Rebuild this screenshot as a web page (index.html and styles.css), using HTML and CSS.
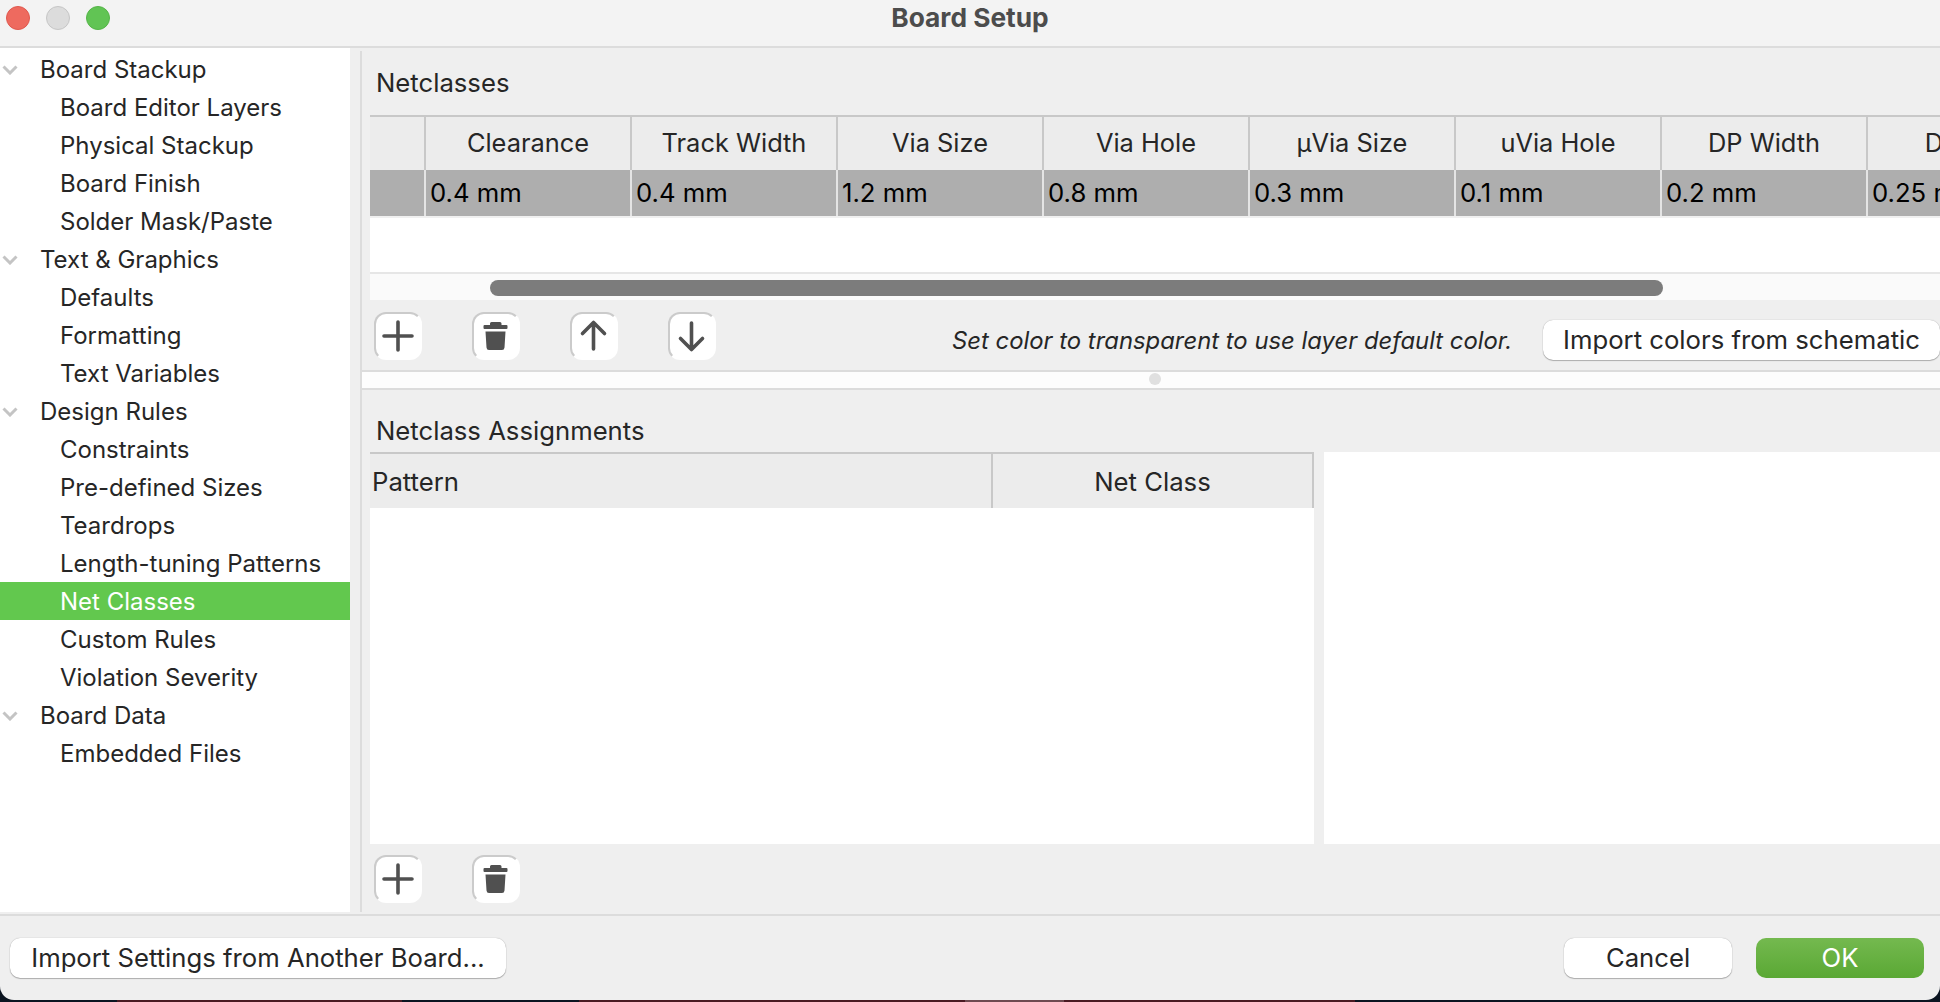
FILE: index.html
```html
<!doctype html>
<html>
<head>
<meta charset="UTF-8">
<title>Board Setup</title>
	<link rel="stylesheet" href="styles.css">
</head>

<body>
	<div class="window">
		<div class="titlebar">
			<div class="lights">
				<span class="light red"></span>
				<span class="light gray"></span>
				<span class="light green"></span>
			</div>
			<div class="title">Board Setup</div>
		</div>

		<div class="main">
			<div class="tree">
				<div class="row top"><svg class="chev" viewBox="0 0 16 10"><path d="M1.5 1.5 L8 8 L14.5 1.5"/></svg>Board Stackup</div>
				<div class="row">Board Editor Layers</div>
				<div class="row">Physical Stackup</div>
				<div class="row">Board Finish</div>
				<div class="row">Solder Mask/Paste</div>
				<div class="row top"><svg class="chev" viewBox="0 0 16 10"><path d="M1.5 1.5 L8 8 L14.5 1.5"/></svg>Text &amp; Graphics</div>
				<div class="row">Defaults</div>
				<div class="row">Formatting</div>
				<div class="row">Text Variables</div>
				<div class="row top"><svg class="chev" viewBox="0 0 16 10"><path d="M1.5 1.5 L8 8 L14.5 1.5"/></svg>Design Rules</div>
				<div class="row">Constraints</div>
				<div class="row">Pre-defined Sizes</div>
				<div class="row">Teardrops</div>
				<div class="row">Length-tuning Patterns</div>
				<div class="row selected">Net Classes</div>
				<div class="row">Custom Rules</div>
				<div class="row">Violation Severity</div>
				<div class="row top"><svg class="chev" viewBox="0 0 16 10"><path d="M1.5 1.5 L8 8 L14.5 1.5"/></svg>Board Data</div>
				<div class="row">Embedded Files</div>
			</div>

			<div class="content">
				<div class="upper">
					<div class="label">Netclasses</div>
					<div class="grid">
						<div class="gridrow head">
							<div class="cell corner"></div>
							<div class="cell">Clearance</div>
							<div class="cell">Track Width</div>
							<div class="cell">Via Size</div>
							<div class="cell">Via Hole</div>
							<div class="cell">µVia Size</div>
							<div class="cell">uVia Hole</div>
							<div class="cell">DP Width</div>
							<div class="cell">DP Gap</div>
						</div>
						<div class="gridrow data">
							<div class="cell corner"></div>
							<div class="cell">0.4 mm</div>
							<div class="cell">0.4 mm</div>
							<div class="cell">1.2 mm</div>
							<div class="cell">0.8 mm</div>
							<div class="cell">0.3 mm</div>
							<div class="cell">0.1 mm</div>
							<div class="cell">0.2 mm</div>
							<div class="cell">0.25 mm</div>
						</div>
						<div class="gridblank"></div>
						<div class="scrolltrack"><div class="scrollthumb"></div></div>
					</div>
					<div class="toolbar">
						<button class="tool"><svg viewBox="0 0 48 48"><path class="line" d="M10 24 H38 M24 10 V38"/></svg></button>
						<button class="tool"><svg viewBox="0 0 48 48"><path class="fill" d="M18 11.500 Q18 10 19.500 10 H28 Q29.500 10 29.500 11.500 V13 H34.500 Q35.500 13 35.500 14 V16 Q35.500 17 34.500 17 H12.500 Q11.500 17 11.500 16 V14 Q11.500 13 12.500 13 H18 Z M13.500 19.500 H33.500 L32.500 35.500 Q32.300 38 30 38 H17 Q14.700 38 14.500 35.500 Z"/></svg></button>
						<button class="tool"><svg viewBox="0 0 48 48"><path class="line" d="M23.500 37 V11 M12.500 21.500 L23.500 10.500 L34.500 21.500"/></svg></button>
						<button class="tool"><svg viewBox="0 0 48 48"><path class="line" d="M23.500 11 V37 M12.500 26.500 L23.500 37.500 L34.500 26.500"/></svg></button>
						<div class="hint">Set color to transparent to use layer default color.</div>
						<button class="btn import">Import colors from schematic</button>
					</div>
				</div>

				<div class="sash"><span class="sashdot"></span></div>

				<div class="lower">
					<div class="label">Netclass Assignments</div>
					<div class="panels">
						<div class="assign">
							<div class="assignhead">
								<div class="acell pattern">Pattern</div>
								<div class="acell netclass">Net Class</div>
							</div>
						</div>
						<div class="preview"></div>
					</div>
					<div class="toolbar small">
						<button class="tool"><svg viewBox="0 0 48 48"><path class="line" d="M10 24 H38 M24 10 V38"/></svg></button>
						<button class="tool"><svg viewBox="0 0 48 48"><path class="fill" d="M18 11.500 Q18 10 19.500 10 H28 Q29.500 10 29.500 11.500 V13 H34.500 Q35.500 13 35.500 14 V16 Q35.500 17 34.500 17 H12.500 Q11.500 17 11.500 16 V14 Q11.500 13 12.500 13 H18 Z M13.500 19.500 H33.500 L32.500 35.500 Q32.300 38 30 38 H17 Q14.700 38 14.500 35.500 Z"/></svg></button>
					</div>
				</div>
			</div>
		</div>

		<div class="footer">
			<button class="btn another">Import Settings from Another Board...</button>
			<div class="spacer"></div>
			<button class="btn wide">Cancel</button>
			<button class="btn wide ok">OK</button>
		</div>
	</div>
</body>
</html>
```

FILE: styles.css
```css
html, body {
	margin: 0;
	height: 100%;
	overflow: hidden;
}

/* the desktop wallpaper just shows under the window */
body {
	background: linear-gradient(90deg,
		#0b1420 0, #0b1420 117px,
		#4a1a22 117px, #4a1a22 402px,
		#0b1420 402px, #0b1420 579px,
		#4a1a22 579px, #4a1a22 965px,
		#6e4a50 965px, #6e4a50 1064px,
		#4a1a22 1064px, #4a1a22 1355px,
		#0b1420 1355px);
	font-family: Inter, "Liberation Sans", sans-serif;
	font-size: 25.7px;
	color: #262626;
}

.window {
	width: 1940px;
	height: 1000px;
	background-color: #efefef;
	border-radius: 0 0 14px 14px;
	overflow: hidden;
	display: flex;
	flex-direction: column;
}

.titlebar {
	height: 46px;
	flex: none;
	background-color: #f3f3f3;
	border-bottom: 2px solid #dcdcdc;
	display: flex;
	align-items: center;
}

.lights {
	display: flex;
	gap: 16px;
	padding-left: 6px;
	margin-top: -10px;
}

.light {
	width: 24px;
	height: 24px;
	border-radius: 50%;
	box-sizing: border-box;
}

.red {
	background-color: #ee6a5f;
	border: 1px solid #e0584e;
}

.gray {
	background-color: #dcdcdc;
	border: 1px solid #c6c6c6;
}

.green {
	background-color: #61c454;
	border: 1px solid #55b548;
}

.title {
	flex: 1;
	text-align: center;
	font-size: 26.3px;
	font-weight: 700;
	color: #4c4c4c;
	margin-left: -110px;
	margin-top: -12px;
}

.main {
	flex: 1;
	display: flex;
	min-height: 0;
}

.tree {
	width: 350px;
	flex: none;
	background-color: #ffffff;
	padding-top: 2px;
	height: 862px;
	font-size: 24px;
}

.row {
	height: 38px;
	line-height: 40px;
	padding-left: 60px;
	white-space: nowrap;
}

.row.top {
	padding-left: 40px;
	position: relative;
}

.chev {
	position: absolute;
	left: 2px;
	top: 15px;
	width: 16px;
	height: 10px;
	fill: none;
	stroke: #c4c4c4;
	stroke-width: 3px;
}

.selected {
	background-color: #62c84e;
	color: #ffffff;
}

.content {
	width: 1578px;
	margin-left: 10px;
	border-left: 2px solid #dcdcdc;
	margin-top: 3px;
	height: 861px;
	flex: none;
	display: flex;
	flex-direction: column;
}

.upper {
	height: 319px;
	flex: none;
	padding-left: 8px;
	border-bottom: 2px solid #dcdcdc;
}

.label {
	padding-left: 6px;
	line-height: 30px;
}

.upper .label {
	padding-top: 17px;
	height: 47px;
}

.grid {
	overflow: hidden;
	border-top: 2px solid #c8c8c8;
}

.gridrow {
	display: flex;
	width: 1800px;
}

.cell {
	width: 206px;
	flex: none;
	box-sizing: border-box;
	border-right: 2px solid #c8c8c8;
}

.cell.corner {
	width: 56px;
}

.head .cell {
	height: 53px;
	line-height: 52px;
	font-size: 25.4px;
	text-align: center;
	background-color: #ececec;
}

.data .cell {
	height: 46px;
	line-height: 46px;
	padding-left: 4px;
	background-color: #aeaeae;
	color: #000000;
	border-right-color: #e4e4e4;
}

.gridblank {
	height: 54px;
	background-color: #ffffff;
	border-top: 2px solid #f0f0f0;
	border-bottom: 2px solid #e6e6e6;
}

.scrolltrack {
	height: 26px;
	background-color: #fafafa;
	padding: 6px 0 0 120px;
	box-sizing: border-box;
}

.scrollthumb {
	width: 1173px;
	height: 16px;
	border-radius: 8px;
	background-color: #7c7c7c;
}

.toolbar {
	display: flex;
	align-items: flex-start;
	padding: 12px 0 0 4px;
	gap: 50px;
}

.tool {
	width: 48px;
	height: 48px;
	flex: none;
	padding: 0;
	background-color: #ffffff;
	border: 2px solid #cbcbcb;
	border-right-color: transparent;
	border-bottom-color: transparent;
	border-radius: 12px;
	box-sizing: border-box;
}

.tool svg {
	display: block;
	width: 48px;
	height: 48px;
	margin: -2px;
}

.line {
	fill: none;
	stroke: #505050;
	stroke-width: 3.6px;
	stroke-linecap: round;
	stroke-linejoin: round;
}

.fill {
	fill: #505050;
}

.hint {
	width: 559px;
	flex: none;
	font-style: italic;
	font-size: 23.85px;
	line-height: 30px;
	margin: 14px -18px 0 186px;
	white-space: nowrap;
}

.btn {
	font-family: inherit;
	font-size: 25.7px;
	color: #262626;
	height: 40px;
	padding: 0 0 2px;
	flex: none;
	background-color: #ffffff;
	border: 0;
	border-radius: 10px;
	box-shadow: 0 0 1px rgba(0, 0, 0, 0.35), 0 1px 1px rgba(0, 0, 0, 0.25);
	white-space: nowrap;
}

.import {
	margin-top: 8px;
	width: 397px;
}

.another {
	width: 496px;
}

.sash {
	height: 16px;
	background-color: #fdfdfd;
	border-bottom: 2px solid #dcdcdc;
	flex: none;
	position: relative;
}

.sashdot {
	position: absolute;
	left: 787px;
	top: 1px;
	width: 12px;
	height: 12px;
	border-radius: 50%;
	background-color: #e0e0e0;
}

.lower {
	flex: 1;
	padding-left: 8px;
}

.lower .label {
	padding-top: 26px;
	height: 36px;
}

.panels {
	display: flex;
	height: 392px;
	gap: 10px;
}

.assign {
	width: 944px;
	background-color: #ffffff;
	flex: none;
}

.assignhead {
	display: flex;
	height: 56px;
	background-color: #ececec;
	border-top: 2px solid #c8c8c8;
	box-sizing: border-box;
}

.acell {
	line-height: 56px;
	box-sizing: border-box;
}

.pattern {
	width: 623px;
	padding-left: 2px;
	border-right: 2px solid #c8c8c8;
}

.netclass {
	flex: 1;
	text-align: center;
	border-right: 2px solid #c8c8c8;
}

.preview {
	flex: 1;
	background-color: #ffffff;
}

.toolbar.small {
	padding-top: 11px;
}

.footer {
	height: 86px;
	flex: none;
	border-top: 2px solid #dcdcdc;
	display: flex;
	gap: 24px;
	padding: 22px 16px 0 10px;
	box-sizing: border-box;
}

.spacer {
	flex: 1;
}

.wide {
	width: 168px;
}

.ok {
	color: #ffffff;
	background: linear-gradient(#74b94f, #5aa834);
	box-shadow: none;
}
```
